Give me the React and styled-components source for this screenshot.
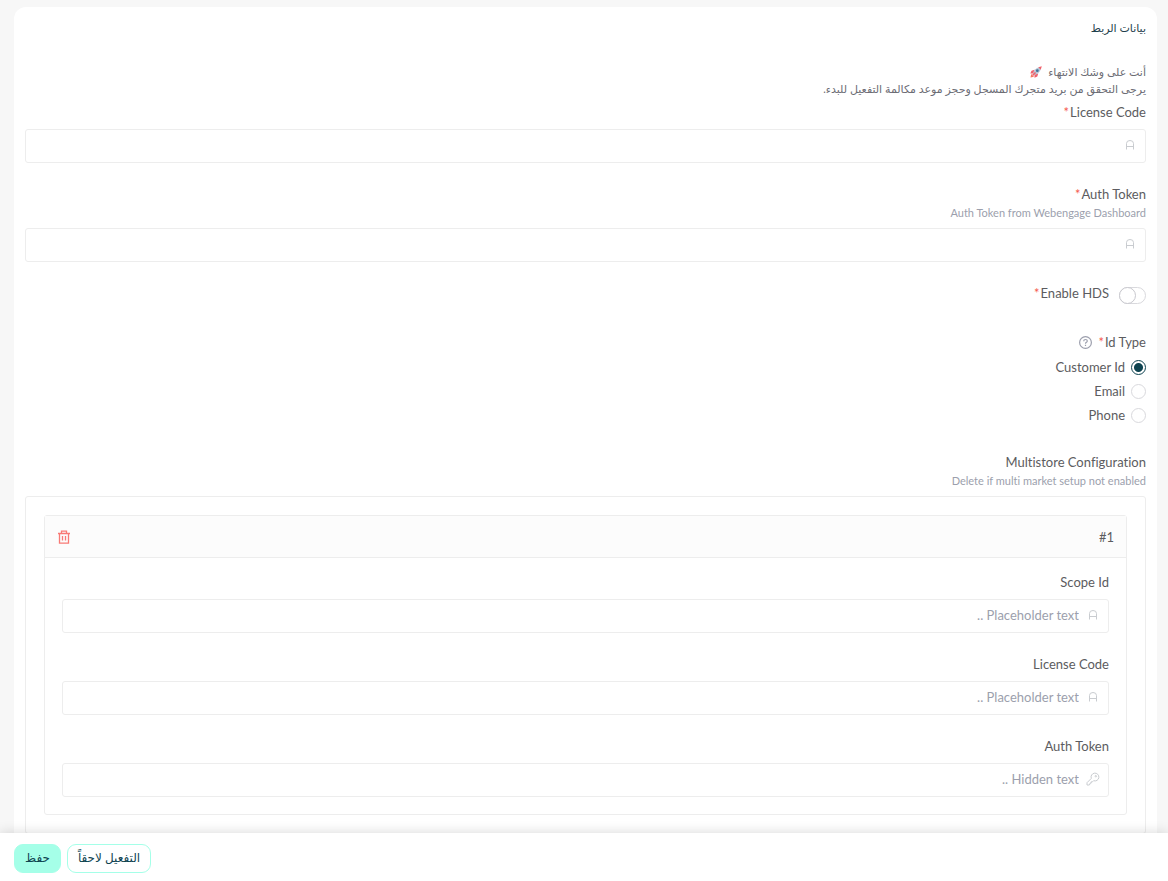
import React, { useId, useState } from "react";
import styled, { createGlobalStyle } from "styled-components";

const GlobalStyle = createGlobalStyle`
  *, *::before, *::after { box-sizing: border-box; }
  body { margin: 0; background: #f7f7f7; }
  body, button, input {
    font-family: Lato, "DejaVu Sans", sans-serif;
    font-size: 13px;
    color: #5c5c60;
    font-variant-ligatures: no-common-ligatures;
  }
`;

const Page = styled.div`
  height: 100vh;
  display: flex;
  flex-direction: column;
`;

const Content = styled.main`
  flex: 1;
  min-height: 0;
  overflow-y: auto;
  scrollbar-width: none;
  padding: 7px 11px 0 14px;
`;

const Card = styled.section`
  background: #fff;
  border-radius: 12px;
  padding: 11px 11px 24px;
`;

const Title = styled.h1`
  margin: 0 0 25px;
  font-size: 11px;
  line-height: 20px;
  font-weight: 400;
  color: #1f3f4d;
`;

const Intro = styled.p`
  margin: 0 0 5px;
  font-size: 11px;
  line-height: 17px;
  color: #6c6c74;
`;

const Rocket = styled.svg`
  width: 12px;
  height: 12px;
  margin: 0 3px;
  vertical-align: -2px;
`;

const Field = styled.div`
  margin-bottom: ${(p) => (p.$wide ? 25 : 21)}px;
  &:last-child { margin-bottom: 0; }
`;

const Caption = styled.div`
  display: flex;
  align-items: center;
  gap: 1px;
  line-height: 20px;
`;

const Star = styled.span`
  color: #f55a4e;
`;

const Hint = styled.p`
  margin: 0;
  font-size: 11px;
  line-height: 17px;
  color: #9c9fad;
`;

const Control = styled.div`
  display: flex;
  align-items: center;
  gap: 7px;
  height: 34px;
  margin-top: 7px;
  padding: 0 8px 2px;
  border: 1px solid #ededed;
  border-radius: 3px;
  svg { flex: none; width: 14px; height: 14px; color: #c9ccd0; }
`;

const TextInput = styled.input`
  flex: 1;
  min-width: 0;
  height: 100%;
  padding: 0;
  border: 0;
  outline: 0;
  background: transparent;
  &::placeholder { color: #9c9fad; opacity: 1; }
`;

const SwitchRow = styled.div`
  display: flex;
  align-items: flex-start;
  gap: 10px;
  height: 24px;
`;

const Switch = styled.input`
  appearance: none;
  width: 27px;
  height: 17px;
  margin: 4px 0 0;
  border: 1px solid #d9d9dd;
  border-radius: 9px;
  background: #fff;
  display: flex;
  justify-content: flex-end;
  &::before {
    content: "";
    width: 17px;
    height: 17px;
    margin: -1px 0 0 -1px;
    border: 1px solid #c8c8ce;
    border-radius: 50%;
    background: #fff;
  }
  &:checked { background: #a5ffe8; justify-content: flex-start; }
`;

const HelpButton = styled.button`
  display: flex;
  margin: 0 5px 0 0;
  padding: 0;
  border: 0;
  background: none;
  color: #9c9fad;
  svg { width: 13px; height: 13px; }
`;

const Options = styled.div`
  padding-top: 3px;
`;

const Option = styled.label`
  display: flex;
  align-items: center;
  gap: 6px;
  height: 24px;
`;

const Radio = styled.input`
  appearance: none;
  width: 15px;
  height: 15px;
  margin: 0;
  border: 1px solid #d9d9dd;
  border-radius: 50%;
  background: #fff;
  &:checked {
    border-color: #0f4451;
    background: radial-gradient(circle, #0f4451 4px, #fff 5px);
  }
`;

const Repeater = styled.div`
  margin-top: 7px;
  padding: 18px;
  border: 1px solid #ededed;
  border-radius: 3px;
`;

const Item = styled.div`
  border: 1px solid #ededed;
  border-radius: 3px;
`;

const ItemHeader = styled.header`
  display: flex;
  align-items: center;
  justify-content: space-between;
  height: 42px;
  padding: 0 12px;
  border-bottom: 1px solid #ededed;
  background: #fcfcfc;
`;

const DeleteButton = styled.button`
  display: flex;
  padding: 0;
  border: 0;
  background: none;
  color: #f87a75;
  svg { width: 14px; height: 14px; }
`;

const ItemBody = styled.div`
  padding: 14px 17px 17px;
`;

const Footer = styled.footer`
  position: relative;
  display: flex;
  justify-content: flex-end;
  gap: 6px;
  padding: 11px 14px 8px;
  background: #fff;
  box-shadow: 0 0 12px rgba(0, 0, 0, 0.16);
`;

const Action = styled.button`
  height: 29px;
  padding: 0 10px 2px;
  border: 1px solid #a5ffe8;
  border-radius: 9px;
  background: ${(p) => (p.$primary ? "#a5ffe8" : "#fff")};
  color: #0f4451;
  font-size: 12px;
`;

const LetterIcon = () => (
  <svg viewBox="0 0 14 14" fill="none" stroke="currentColor" aria-hidden="true">
    <path d="M3.500 11.500V5.500Q3.500 2.500 7 2.500T10.500 5.500V11.500M3.500 8.500H10.500" />
  </svg>
);

const KeyIcon = () => (
  <svg viewBox="0 0 14 14" fill="none" stroke="currentColor" strokeLinejoin="round" aria-hidden="true">
    <path d="M5.300 6.400A3.900 3.900 0 1 1 7.600 8.700L6.500 9.800H5.200V11.100H4V12.300L3 13H1V10.700Z" />
    <circle cx="9.800" cy="4.200" r=".7" />
  </svg>
);

const TrashIcon = () => (
  <svg viewBox="0 0 14 14" fill="none" stroke="currentColor" strokeWidth="1.300" aria-hidden="true">
    <path d="M1 3.500H13M4.500 3.200V1.200H9.500V3.200M2.500 3.500V13.100H11.500V3.500" />
    <path d="M5.500 6V10.500M8.500 6V10.500" />
  </svg>
);

const HelpIcon = () => (
  <svg viewBox="0 0 13 13" fill="none" stroke="currentColor" aria-hidden="true">
    <circle cx="6.500" cy="6.500" r="5.900" strokeWidth="1.200" />
    <path d="M4.700 5.200Q4.700 3.500 6.500 3.500T8.300 5.100Q8.300 6 7.300 6.400Q6.500 6.700 6.500 7.700M6.500 8.800V9.900" strokeWidth="1.200" />
  </svg>
);

const RocketIcon = () => (
  <Rocket viewBox="0 0 12 12" aria-hidden="true">
    <path d="M4.500 3.800L1.500 4.800 0.300 7.500 4 7.500ZM8.200 7.500L7.300 10.500 4.500 11.700 4.500 8Z" fill="#f0616b" />
    <path d="M0.500 11.500L1.200 8 4 10.800Z" fill="#f4765f" />
    <path d="M2.800 7.800Q4.200 2.600 8.800 1.200L10.800 3.200Q9.400 7.800 4.200 9.200Z" fill="#b9c8d6" />
    <path d="M8.300 1.300L11.800 0.200 10.700 3.700Z" fill="#f0616b" />
    <circle cx="7.300" cy="4.700" r="1.400" fill="#3f7298" />
    <path d="M2.600 9.400L5.500 6.500" stroke="#f0616b" strokeWidth="1.500" />
  </Rocket>
);

function TextField({ label, hint, required, placeholder, secret }) {
  const id = useId();
  return (
    <Field>
      <Caption>
        <label htmlFor={id}>{label}</label>
        {required && <Star>*</Star>}
      </Caption>
      {hint && <Hint>{hint}</Hint>}
      <Control>
        {secret ? <KeyIcon /> : <LetterIcon />}
        <TextInput id={id} type={secret ? "password" : "text"} placeholder={placeholder} />
      </Control>
    </Field>
  );
}

export default function App() {
  const [idType, setIdType] = useState("Customer Id");
  return (
    <Page dir="rtl" lang="ar">
      <GlobalStyle />
      <Content>
        <Card>
          <Title>بيانات الربط</Title>
          <Intro>
            أنت على وشك الانتهاء <RocketIcon />
            <br />
            يرجى التحقق من بريد متجرك المسجل وحجز موعد مكالمة التفعيل للبدء.
          </Intro>
          <TextField label="License Code" required />
          <TextField label="Auth Token" required hint="Auth Token from Webengage Dashboard" />
          <Field $wide>
            <SwitchRow>
              <Switch id="hds" type="checkbox" role="switch" />
              <Caption>
                <label htmlFor="hds">Enable HDS</label>
                <Star>*</Star>
              </Caption>
            </SwitchRow>
          </Field>
          <Field $wide role="radiogroup" aria-labelledby="id-type">
            <Caption>
              <span id="id-type">Id Type</span>
              <Star>*</Star>
              <HelpButton type="button" aria-label="Id Type">
                <HelpIcon />
              </HelpButton>
            </Caption>
            <Options>
              {["Customer Id", "Email", "Phone"].map((name) => (
                <Option key={name}>
                  <Radio type="radio" name="idType" checked={idType === name} onChange={() => setIdType(name)} />
                  {name}
                </Option>
              ))}
            </Options>
          </Field>
          <Field>
            <Caption>Multistore Configuration</Caption>
            <Hint>Delete if multi market setup not enabled</Hint>
            <Repeater>
              <Item>
                <ItemHeader>
                  <span dir="ltr">#1</span>
                  <DeleteButton type="button" aria-label="Delete">
                    <TrashIcon />
                  </DeleteButton>
                </ItemHeader>
                <ItemBody>
                  <TextField label="Scope Id" placeholder="Placeholder text .." />
                  <TextField label="License Code" placeholder="Placeholder text .." />
                  <TextField label="Auth Token" placeholder="Hidden text .." secret />
                </ItemBody>
              </Item>
            </Repeater>
          </Field>
        </Card>
      </Content>
      <Footer>
        <Action type="button">التفعيل لاحقاً</Action>
        <Action type="button" $primary>حفظ</Action>
      </Footer>
    </Page>
  );
}
